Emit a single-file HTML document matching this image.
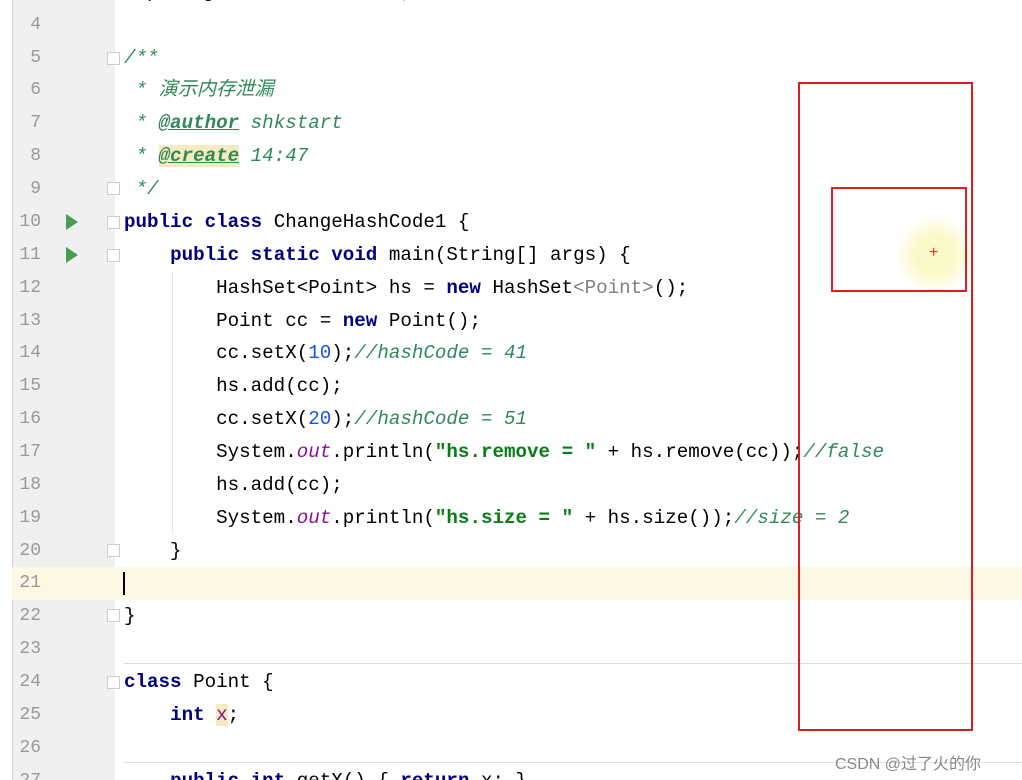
<!DOCTYPE html>
<html style="height:780px;overflow:hidden"><head><meta charset="utf-8"><style>
html,body{margin:0;width:1022px;height:780px;overflow:hidden;}
body{background:#fff;position:relative;font-family:"Liberation Mono","Noto Sans CJK SC",monospace;}
.gut{position:absolute;left:12px;top:0;width:102px;height:780px;background:#f0f0f0;border-left:1px solid #cfcfcf;}
.hl{position:absolute;left:12px;top:567px;width:1010px;height:33px;background:#fdf8e3;}
.ln{position:absolute;left:13px;width:28px;text-align:right;color:#999;font-size:18px;line-height:33px;height:33px;}
.c{position:absolute;left:124px;font-size:19.2px;line-height:33px;height:33px;white-space:pre;color:#000;}
.k{color:#000080;font-weight:bold}
.cm{color:#2f8a5a;font-style:italic}
.tag{color:#2f8a5a;font-style:italic;font-weight:bold;text-decoration:underline}
.n{color:#1750eb}
.s{color:#067d17;font-weight:bold}
.f{color:#871094;font-style:italic}
.g{color:#808080}
.run{position:absolute;left:66px;width:0;height:0;border-left:12px solid #499c54;border-top:8px solid transparent;border-bottom:8px solid transparent;}
.fold{position:absolute;left:107px;width:11px;height:11px;border:1px solid #ccc;background:#fff;}
</style></head><body>
<div class="gut"></div>
<div class="hl"></div>
<div style="position:absolute;left:124px;top:663px;width:898px;height:1px;background:#ddd"></div>
<div style="position:absolute;left:124px;top:762px;width:898px;height:1px;background:#ddd"></div>
<div style="position:absolute;left:172px;top:272px;width:1px;height:262px;background:#e8e8e8"></div>

<div class="ln" style="top:9px">4</div>
<div class="ln" style="top:42px">5</div>
<div class="ln" style="top:74px">6</div>
<div class="ln" style="top:107px">7</div>
<div class="ln" style="top:140px">8</div>
<div class="ln" style="top:173px">9</div>
<div class="ln" style="top:206px">10</div>
<div class="ln" style="top:239px">11</div>
<div class="ln" style="top:272px">12</div>
<div class="ln" style="top:305px">13</div>
<div class="ln" style="top:337px">14</div>
<div class="ln" style="top:370px">15</div>
<div class="ln" style="top:403px">16</div>
<div class="ln" style="top:436px">17</div>
<div class="ln" style="top:469px">18</div>
<div class="ln" style="top:502px">19</div>
<div class="ln" style="top:535px">20</div>
<div class="ln" style="top:567px">21</div>
<div class="ln" style="top:600px">22</div>
<div class="ln" style="top:633px">23</div>
<div class="ln" style="top:666px">24</div>
<div class="ln" style="top:699px">25</div>
<div class="ln" style="top:732px">26</div>
<div class="ln" style="top:765px">27</div>

<div class="run" style="top:214px"></div>
<div class="run" style="top:247px"></div>
<div class="fold" style="top:52px"></div>
<div class="fold" style="top:182px"></div>
<div class="fold" style="top:216px"></div>
<div class="fold" style="top:249px"></div>
<div class="fold" style="top:544px"></div>
<div class="fold" style="top:609px"></div>
<div class="fold" style="top:676px"></div>

<div class="c" style="top:-24px">import java.util.HashSet;</div>
<div class="c cm" style="top:42px">/**</div>
<div class="c cm" style="top:74px"> * 演示内存泄漏</div>
<div class="c cm" style="top:107px"> * <span class="tag">@author</span> shkstart</div>
<div class="c cm" style="top:140px"> * <span class="tag" style="background:#f5eac0">@create</span> 14:47</div>
<div class="c cm" style="top:173px"> */</div>
<div class="c" style="top:206px"><span class="k">public class</span> ChangeHashCode1 {</div>
<div class="c" style="top:239px">    <span class="k">public static void</span> main(String[] args) {</div>
<div class="c" style="top:272px">        HashSet&lt;Point&gt; hs = <span class="k">new</span> HashSet<span class="g">&lt;Point&gt;</span>();</div>
<div class="c" style="top:305px">        Point cc = <span class="k">new</span> Point();</div>
<div class="c" style="top:337px">        cc.setX(<span class="n">10</span>);<span class="cm">//hashCode = 41</span></div>
<div class="c" style="top:370px">        hs.add(cc);</div>
<div class="c" style="top:403px">        cc.setX(<span class="n">20</span>);<span class="cm">//hashCode = 51</span></div>
<div class="c" style="top:436px">        System.<span class="f">out</span>.println(<span class="s">"hs.remove = "</span> + hs.remove(cc));<span class="cm">//false</span></div>
<div class="c" style="top:469px">        hs.add(cc);</div>
<div class="c" style="top:502px">        System.<span class="f">out</span>.println(<span class="s">"hs.size = "</span> + hs.size());<span class="cm">//size = 2</span></div>
<div class="c" style="top:535px">    }</div>
<div style="position:absolute;left:123px;top:572px;width:2px;height:23px;background:#000"></div>
<div class="c" style="top:600px">}</div>
<div class="c" style="top:666px"><span class="k">class</span> Point {</div>
<div class="c" style="top:699px">    <span class="k">int</span> <span class="f" style="font-style:normal;background:#f5eac0">x</span>;</div>
<div class="c" style="top:765px">    <span class="k">public int</span> getX() { <span class="k">return</span> x; }</div>

<div style="position:absolute;left:895px;top:215px;width:80px;height:80px;border-radius:50%;background:radial-gradient(#fcf9c8 35%,rgba(253,251,208,0) 70%)"></div>
<div style="position:absolute;left:929px;top:244px;color:#e53030;font-size:16px;font-family:'Liberation Sans',sans-serif">+</div>
<div style="position:absolute;left:798px;top:82px;width:171px;height:645px;border:2px solid #d81e1e"></div>
<div style="position:absolute;left:831px;top:187px;width:132px;height:101px;border:2px solid #e01e1e"></div>
<div style="position:absolute;left:835px;top:750px;font-family:'Liberation Sans','Noto Sans CJK SC',sans-serif;font-size:16px;color:#888">CSDN @过了火的你</div>
</body></html>
